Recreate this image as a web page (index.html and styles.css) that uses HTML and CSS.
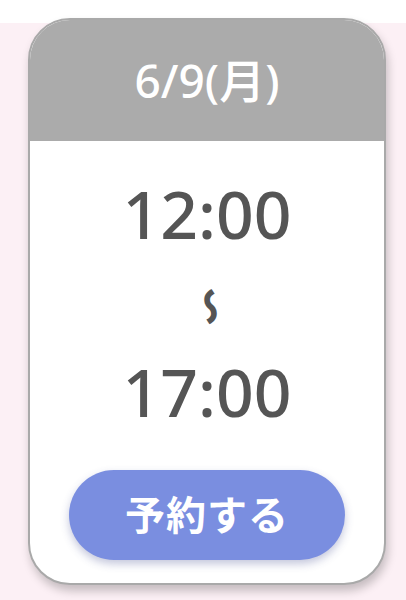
FILE: index.html
```html
<!DOCTYPE html>
<html lang="ja">
<head>
<meta charset="utf-8">
<link rel="stylesheet" href="styles.css">
</head>
<body>
<div class="page">
  <div class="card">
    <div class="card-head">6/9(月)</div>
    <div class="card-body">
      <div class="time">12:00</div>
      <div class="wave-box"><span class="wave">〜</span></div>
      <div class="time">17:00</div>
      <button class="reserve">予約する</button>
    </div>
  </div>
</div>
</body>
</html>
```
FILE: styles.css
```css
html, body {
  margin: 0;
  padding: 0;
}
body {
  width: 406px;
  height: 600px;
  overflow: hidden;
  background: linear-gradient(to bottom, #ffffff 0, #ffffff 23px, #fcf0f5 23px, #fcf0f5 100%);
  font-family: "Noto Sans", "Noto Sans CJK JP", sans-serif;
}
.page {
  padding: 18px 0 0 28px;
}
.card {
  width: 354px;
  height: 563px;
  border: 2px solid #a9a9a9;
  border-radius: 42px;
  background: #ffffff;
  overflow: hidden;
  box-shadow: 2px 6px 10px rgba(0, 0, 0, 0.22);
  display: flex;
  flex-direction: column;
}
.card-head {
  height: 121px;
  background: #ababab;
  color: #ffffff;
  font-size: 46px;
  font-weight: 500;
  line-height: 46px;
  text-align: center;
  padding-top: 37px;
  box-sizing: border-box;
}
.card-body {
  flex: 1;
  display: flex;
  flex-direction: column;
  align-items: center;
  padding-top: 40px;
}
.time {
  font-size: 66px;
  font-weight: 500;
  line-height: 65px;
  height: 65px;
  color: #555555;
}
.wave-box {
  height: 113px;
  display: flex;
  align-items: center;
  justify-content: center;
  padding: 8px 0 0 6px;
  box-sizing: border-box;
}
.wave {
  writing-mode: vertical-rl;
  font-family: "Noto Sans CJK JP", sans-serif;
  font-size: 38px;
  font-weight: 900;
  line-height: 38px;
  color: #555555;
}
.reserve {
  margin-top: 46px;
  width: 276px;
  height: 90px;
  border: none;
  border-radius: 45px;
  background: #7a8ee0;
  color: #ffffff;
  font-family: "Noto Sans CJK JP", sans-serif;
  font-size: 40px;
  font-weight: 700;
  letter-spacing: 1px;
  padding: 0 0 4px;
  box-shadow: 0 4px 8px rgba(60, 70, 140, 0.3);
}
```
